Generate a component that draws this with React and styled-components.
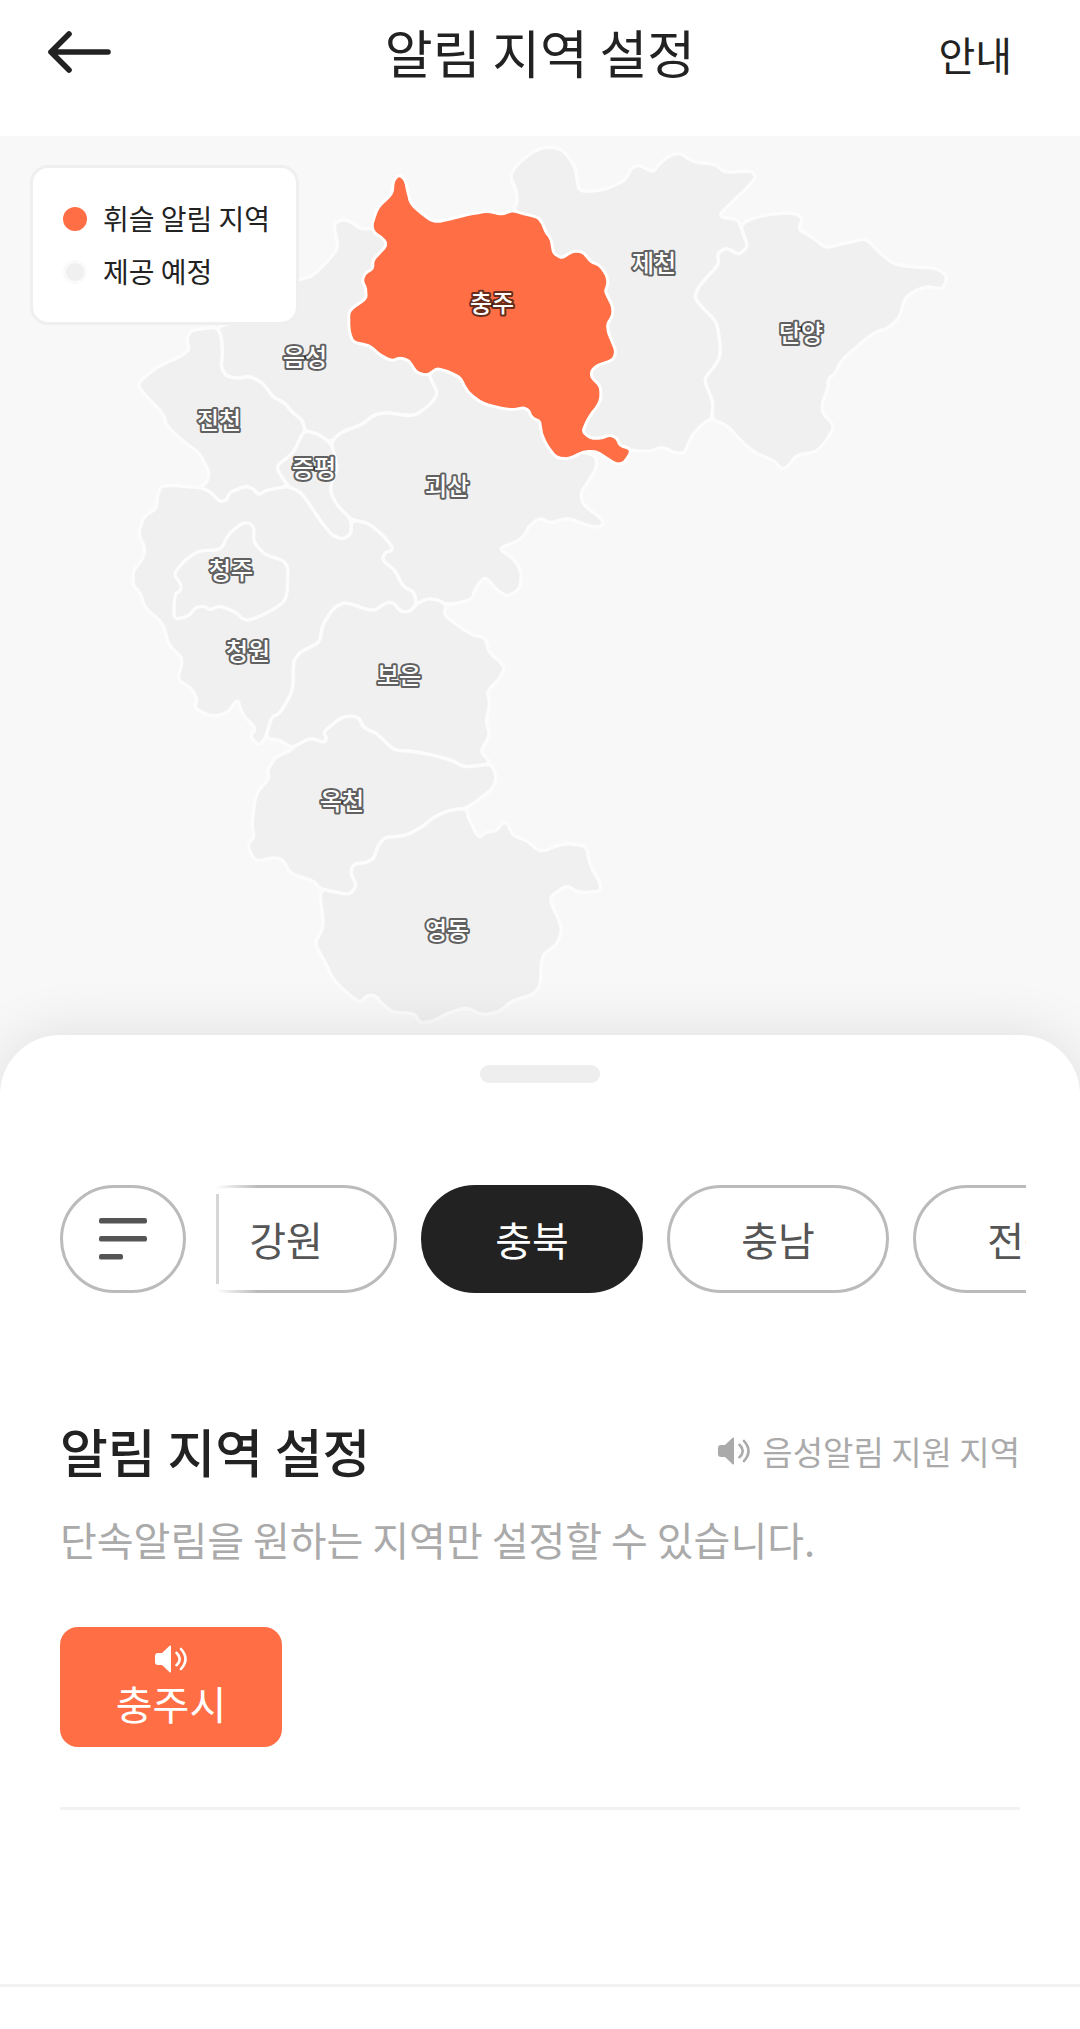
import React, { useLayoutEffect, useRef, useState } from 'react'
import styled, { createGlobalStyle } from "styled-components"

const regions = [
  {
    name: "청원", x: 248, y: 516,
    points: "602,1054 485,1047 472,1077 470,1117 430,1142 415,1197 435,1232 430,1267 400,1302 398,1347 422,1372 432,1412 490,1462 505,1527 550,1567 532,1632 575,1657 592,1687 582,1717 635,1742 685,1730 712,1687 728,1737 768,1777 750,1802 777,1830 797,1805 815,1742 840,1732 880,1662 880,1577 900,1547 960,1520 967,1467 1000,1417 1035,1397 1120,1427 1160,1399 1180,1400 1202,1427 1230,1427 1250,1404 1242,1367 1210,1352 1185,1302 1147,1272 1155,1250 1182,1240 1150,1197 1100,1159 1055,1152 1052,1197 1025,1209 995,1197 960,1152 920,1092 900,1067 865,1050 800,1062 775,1077 760,1057 735,1050 688,1070 678,1094 660,1097 630,1067",
  },
  {
    name: "청주", x: 231, y: 435,
    points: "520,1314 545,1347 540,1367 525,1372 520,1452 567,1440 585,1415 610,1410 632,1422 655,1409 705,1427 738,1457 810,1427 860,1392 865,1297 850,1272 795,1257 760,1217 763,1177 750,1161 727,1161 685,1194 663,1242 595,1244 550,1277",
  },
  {
    name: "진천", x: 219, y: 285,
    points: "650,572 575,582 560,607 568,642 540,662 470,692 412,742 430,772 490,832 498,867 550,917 595,947 628,1007 622,1037 602,1054 630,1067 660,1097 678,1094 688,1070 735,1050 760,1057 775,1077 800,1062 865,1050 835,1007 832,987 880,952 900,907 915,885 908,852 880,832 850,797 820,785 790,742 750,720 710,727 675,717 663,687 668,662 665,602",
  },
  {
    name: "음성", x: 305, y: 222,
    points: "1117,277 1085,280 1052,258 1030,250 1000,262 1015,332 995,362 940,419 900,429 860,452 760,542 650,572 665,602 668,662 663,687 675,717 710,727 750,720 790,742 820,785 850,797 880,832 908,852 915,885 950,892 992,920 1025,887 1085,867 1120,837 1160,829 1240,842 1290,807 1315,772 1285,717 1300,640 1200,500 1180,300",
  },
  {
    name: "괴산", x: 447, y: 351,
    points: "992,920 1025,887 1085,867 1120,837 1160,829 1240,842 1290,807 1315,772 1285,717 1310,660 1600,800 1700,940 1790,957 1788,1002 1740,1072 1750,1107 1810,1152 1805,1174 1765,1170 1705,1145 1650,1162 1620,1145 1585,1172 1575,1197 1550,1217 1495,1237 1540,1267 1565,1307 1560,1357 1525,1382 1495,1367 1455,1320 1425,1357 1415,1392 1340,1407 1285,1387 1250,1404 1242,1367 1210,1352 1185,1302 1147,1272 1155,1250 1182,1240 1150,1197 1100,1159 1055,1152 1010,1107 992,1070 992,1045 1012,1000 1005,960",
  },
  {
    name: "증평", x: 314, y: 333,
    points: "915,885 950,892 992,920 1005,960 1012,1000 992,1045 992,1070 1010,1107 1055,1152 1052,1197 1025,1209 995,1197 960,1152 920,1092 900,1067 865,1052 835,1007 832,987 880,952 900,907",
  },
  {
    name: "보은", x: 399, y: 540,
    points: "1250,1404 1285,1387 1315,1392 1340,1407 1330,1437 1410,1494 1458,1507 1465,1547 1515,1592 1500,1627 1460,1667 1470,1702 1458,1757 1470,1797 1440,1847 1475,1882 1395,1895 1350,1870 1240,1845 1182,1844 1130,1792 1092,1777 1075,1742 1030,1740 970,1787 980,1807 972,1820 930,1805 875,1837 840,1812 797,1807 815,1742 840,1732 880,1662 880,1577 900,1547 960,1520 967,1467 1000,1417 1035,1397 1120,1427 1160,1399 1180,1400 1202,1427 1230,1427",
  },
  {
    name: "옥천", x: 342, y: 666,
    points: "875,1837 930,1805 972,1820 980,1807 970,1787 1030,1740 1075,1742 1092,1777 1130,1792 1182,1844 1240,1845 1350,1870 1395,1895 1475,1882 1490,1927 1475,1962 1400,2017 1350,2022 1305,2042 1260,2077 1215,2100 1155,2104 1135,2127 1122,2167 1100,2180 1060,2184 1052,2212 1070,2247 1052,2274 1020,2272 957,2257 945,2237 870,2212 850,2172 825,2164 765,2177 742,2127 763,2102 755,2062 768,1972 808,1927 802,1902 828,1862 865,1847",
  },
  {
    name: "영동", x: 447, y: 795,
    points: "1400,2017 1405,2047 1435,2107 1460,2087 1485,2087 1510,2060 1522,2062 1540,2100 1582,2114 1620,2149 1690,2122 1760,2129 1768,2182 1803,2247 1798,2267 1735,2270 1700,2247 1645,2287 1678,2352 1685,2387 1670,2427 1625,2457 1620,2567 1530,2597 1500,2627 1445,2637 1400,2614 1340,2632 1305,2654 1260,2662 1245,2632 1180,2630 1150,2607 1125,2577 1100,2579 1077,2602 1000,2532 975,2477 943,2422 972,2372 957,2257 1020,2272 1052,2274 1070,2247 1052,2212 1060,2184 1100,2180 1122,2167 1135,2127 1155,2104 1215,2100 1260,2077 1305,2042 1350,2022",
  },
  {
    name: "제천", x: 654, y: 128,
    points: "1540,222 1552,197 1550,167 1533,127 1535,107 1560,77 1605,42 1645,32 1685,40 1705,62 1725,92 1735,157 1750,167 1810,162 1875,134 1895,94 1920,87 1958,109 1980,82 2005,60 2040,50 2080,79 2145,84 2175,110 2255,104 2268,124 2240,157 2160,232 2165,244 2212,250 2222,272 2245,332 2215,357 2180,335 2152,352 2158,384 2100,447 2083,482 2100,507 2145,552 2155,582 2163,652 2150,682 2115,727 2118,747 2140,797 2135,850 2115,857 2075,897 2055,950 2030,952 1985,932 1950,947 1888,942 1780,925 1730,880 1700,500 1600,300",
  },
  {
    name: "단양", x: 801, y: 198,
    points: "2222,272 2240,254 2290,237 2370,230 2408,242 2396,282 2435,302 2478,337 2520,324 2550,320 2598,306 2630,342 2680,385 2740,392 2810,397 2842,420 2830,460 2780,450 2730,472 2710,497 2700,542 2665,577 2625,587 2525,670 2505,714 2485,727 2483,762 2467,797 2467,832 2503,867 2485,907 2450,947 2390,957 2365,990 2345,1000 2320,972 2270,954 2230,922 2180,867 2135,850 2140,797 2118,747 2115,727 2150,682 2163,652 2155,582 2145,552 2100,507 2083,482 2100,447 2158,384 2152,352 2180,335 2215,357 2245,332",
  },
  {
    name: "충주", x: 492, y: 168, active: true,
    points: "1185,134 1198,122 1212,134 1220,172 1228,204 1260,234 1290,257 1315,262 1365,249 1420,237 1465,230 1510,240 1536,227 1570,238 1610,247 1623,262 1632,287 1650,312 1656,355 1686,372 1720,349 1748,352 1768,380 1795,390 1815,417 1820,440 1810,467 1832,507 1835,534 1817,564 1822,597 1844,644 1836,669 1790,684 1770,702 1770,727 1798,752 1798,794 1760,847 1746,880 1747,892 1768,910 1800,912 1828,902 1846,908 1856,932 1891,942 1870,977 1850,980 1820,962 1790,942 1750,942 1705,965 1670,960 1645,927 1628,892 1624,852 1598,842 1590,820 1572,810 1535,818 1450,800 1405,764 1385,722 1345,702 1310,692 1282,714 1252,706 1230,670 1200,660 1175,670 1140,652 1110,624 1062,615 1052,587 1050,532 1060,519 1103,490 1102,457 1092,437 1096,417 1123,400 1123,372 1162,334 1160,312 1117,279 1135,217 1180,177",
  },
];

const provinces = ["강원", "충북", "충남", "전북"];

// closed outline with every corner slightly rounded
function outline(points) {
  const pts = points.split(" ").map((p) => p.split(",").map(Number));
  const between = (a, b) => a.map((v, i) => Math.round(v + (b[i] - v) * 0.35));
  const parts = pts.map((p, i) => {
    const prev = pts[(i + pts.length - 1) % pts.length];
    const next = pts[(i + 1) % pts.length];
    return `${between(p, prev)} Q${p} ${between(p, next)}`;
  });
  return "M" + parts.join("L") + "Z";
}

function SpeakerIcon() {
  return (
    <svg width="32" height="28" viewBox="0 0 32 28" fill="none" aria-hidden="true">
      <path d="M3 8H7L14.6 .8Q16 0 16 1.6V26.4Q16 28 14.6 27.2L7 20H3Q0 20 0 17V11Q0 8 3 8Z" fill="currentColor" />
      <path d="M21.5 7.8Q28 14 21.5 20.2M26 4Q35 14 26 24" stroke="currentColor" strokeWidth="2.6" strokeLinecap="round" />
    </svg>
  )
}

function RegionMap() {
  return (
    <MapSvg viewBox="0 0 1080 959" role="img" aria-label="충북 지도">
      {/* outlines are stored at three times the map's size */}
      <g transform="scale(0.33333)">
        {regions.map((r) => (
          <Area key={r.name} d={outline(r.points)} $active={r.active} />
        ))}
      </g>
      {regions.map((r) => (
        <AreaName key={r.name} x={r.x} y={r.y + 8}>{r.name}</AreaName>
      ))}
    </MapSvg>
  )
}

export default function App() {

  const [province, setProvince] = useState("충북");
  const [cityOn, setCityOn] = useState(true);
  const scroller = useRef(null);

  useLayoutEffect(() => {
    scroller.current.scrollLeft = 41;
  }, []);

  return (
    <Page>
      <GlobalStyle />
      <Header>
        <BackButton type="button" aria-label="뒤로">
          <svg width="64" height="44" viewBox="0 0 64 44" fill="none" stroke="#222" strokeWidth="5.6" strokeLinecap="round" strokeLinejoin="round" aria-hidden="true">
            <path d="M21 4L3 22L21 40M3 22H60" />
          </svg>
        </BackButton>
        <Title>알림 지역 설정</Title>
        <GuideLink href="#guide">안내</GuideLink>
      </Header>

      <MapSection>
        <RegionMap />
        <Legend>
          <LegendItem><Dot $active />휘슬 알림 지역</LegendItem>
          <LegendItem><Dot />제공 예정</LegendItem>
        </Legend>
      </MapSection>

      <Sheet>
        <Handle />
        <Filters>
          <ListButton type="button" aria-label="전체 목록">
            <svg width="48" height="42" viewBox="0 0 48 42" fill="#555" aria-hidden="true">
              <rect width="48" height="5.6" rx="2.2" />
              <rect y="18" width="48" height="5.6" rx="2.2" />
              <rect y="36" width="24" height="5.6" rx="2.2" />
            </svg>
          </ListButton>
          <ChipWindow>
            <Chips ref={scroller}>
              {provinces.map((p) => (
                <Chip key={p} type="button" $active={p === province} onClick={() => setProvince(p)}>{p}</Chip>
              ))}
            </Chips>
          </ChipWindow>
        </Filters>

        <Body>
          <HeadingRow>
            <Heading>알림 지역 설정</Heading>
            <VoiceNote><SpeakerIcon />음성알림 지원 지역</VoiceNote>
          </HeadingRow>
          <Description>단속알림을 원하는 지역만 설정할 수 있습니다.</Description>
          <CityButton type="button" $active={cityOn} onClick={() => setCityOn(!cityOn)}>
            <SpeakerIcon />
            충주시
          </CityButton>
        </Body>
        <Footer />
      </Sheet>
    </Page>
  )
}

const GlobalStyle = createGlobalStyle`
  * {
    box-sizing: border-box;
  }
  body {
    margin: 0;
    background: #fff;
    color: #222;
    font-family: "Noto Sans CJK KR", "Noto Sans", sans-serif;
  }
  button {
    font: inherit;
    padding: 0;
    border: none;
    cursor: pointer;
  }
`;

const Page = styled.div`
  min-height: 100vh;
  display: flex;
  flex-direction: column;
`;

const Header = styled.header`
  display: grid;
  grid-template-columns: 1fr auto 1fr;
  align-items: center;
  height: 136px;
  padding: 0 48px 32px;
`;

const BackButton = styled.button`
  justify-self: start;
  background: none;
  svg {
    display: block;
  }
`;

const Title = styled.h1`
  margin: 0;
  font-size: 52px;
  font-weight: 400;
  line-height: 72px;
`;

const GuideLink = styled.a`
  justify-self: end;
  padding: 4px 20px 0 0;
  color: #222;
  font-size: 40px;
  line-height: 56px;
  text-decoration: none;
`;

const MapSection = styled.section`
  position: relative;
  background: #f8f8f8;
`;

const MapSvg = styled.svg`
  display: block;
  width: 100%;
  height: auto;
`;

const Area = styled.path`
  fill: ${(p) => (p.$active ? "#ff6e45" : "#f0f0f0")};
  stroke: ${(p) => (p.$active ? "#fff" : "#fcfcfc")};
  stroke-width: ${(p) => (p.$active ? 18 : 10)};
  stroke-linejoin: round;
  paint-order: ${(p) => (p.$active ? "stroke" : "normal")};
`;

const AreaName = styled.text`
  fill: #fff;
  stroke: rgba(0, 0, 0, 0.6);
  stroke-width: 4px;
  stroke-linejoin: round;
  paint-order: stroke;
  font-size: 24px;
  font-weight: 500;
  text-anchor: middle;
`;

const Legend = styled.ul`
  position: absolute;
  top: 29px;
  left: 30px;
  margin: 0;
  padding: 24px 26px 24px 30px;
  list-style: none;
  background: #fff;
  border: 3px solid #efefef;
  border-radius: 18px;
`;

const LegendItem = styled.li`
  display: flex;
  align-items: center;
  gap: 16px;
  font-size: 28px;
  line-height: 53px;
`;

const Dot = styled.span`
  width: 24px;
  height: 24px;
  border: 3px solid ${(p) => (p.$active ? "#ff6e45" : "#fafafa")};
  border-radius: 50%;
  background: ${(p) => (p.$active ? "#ff6e45" : "#f0f0f0")};
`;

const Sheet = styled.main`
  position: relative;
  flex: 1;
  display: flex;
  flex-direction: column;
  margin-top: -60px;
  padding-top: 30px;
  background: #fff;
  border-radius: 60px 60px 0 0;
  box-shadow: 0 0 60px rgba(0, 0, 0, 0.11);
`;

const Handle = styled.div`
  align-self: center;
  width: 120px;
  height: 18px;
  border-radius: 9px;
  background: #eee;
`;

const Filters = styled.div`
  display: flex;
  gap: 30px;
  margin-top: 102px;
  padding: 0 54px 0 60px;
`;

const ListButton = styled.button`
  flex: none;
  display: flex;
  align-items: center;
  justify-content: center;
  width: 126px;
  height: 108px;
  border: 3px solid #bbb;
  border-radius: 54px;
  background: #fff;
`;

const ChipWindow = styled.div`
  position: relative;
  flex: 1;
  min-width: 0;
  &::before {
    content: "";
    position: absolute;
    top: 0;
    left: 0;
    width: 42px;
    height: 100%;
    background: linear-gradient(to right, #fff, rgba(255, 255, 255, 0));
    pointer-events: none;
  }
  &::after {
    content: "";
    position: absolute;
    top: 9px;
    bottom: 9px;
    left: 0;
    width: 3px;
    background: #d6d6d6;
  }
`;

const Chips = styled.div`
  display: flex;
  gap: 24px;
  overflow-x: auto;
  scrollbar-width: none;
`;

const Chip = styled.button`
  flex: none;
  width: 222px;
  height: 108px;
  border: 3px solid ${(p) => (p.$active ? "#222" : "#bbb")};
  border-radius: 54px;
  background: ${(p) => (p.$active ? "#222" : "#fff")};
  color: ${(p) => (p.$active ? "#fff" : "#555")};
  font-size: 40px;
  line-height: 56px;
`;

const Body = styled.section`
  margin: 122px 60px 0;
  padding-bottom: 60px;
  border-bottom: 3px solid #f2f2f2;
`;

const HeadingRow = styled.div`
  display: flex;
  align-items: center;
  justify-content: space-between;
`;

const Heading = styled.h2`
  margin: 0;
  font-size: 52px;
  font-weight: 500;
  line-height: 72px;
`;

const VoiceNote = styled.p`
  display: flex;
  align-items: center;
  gap: 12px;
  margin: 0;
  color: #aaa;
  font-size: 33px;
  line-height: 48px;
`;

const Description = styled.p`
  margin: 24px 0 60px;
  color: #aaa;
  font-size: 40px;
  line-height: 56px;
`;

const CityButton = styled.button`
  display: flex;
  flex-direction: column;
  align-items: center;
  gap: 2px;
  width: 222px;
  height: 120px;
  padding-top: 18px;
  border-radius: 18px;
  background: ${(p) => (p.$active ? "#ff6e45" : "#f0f0f0")};
  color: ${(p) => (p.$active ? "#fff" : "#555")};
  font-size: 40px;
  line-height: 56px;
`;

const Footer = styled.footer`
  height: 44px;
  margin-top: 174px;
  border-top: 3px solid #f2f2f2;
`;
